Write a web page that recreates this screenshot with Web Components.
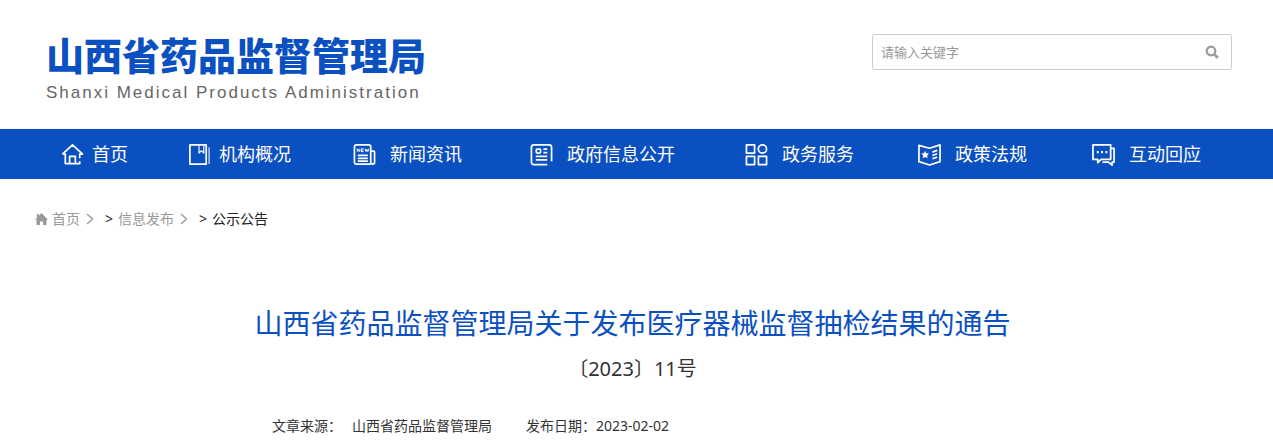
<!DOCTYPE html>
<html lang="zh-CN">
<head>
<meta charset="utf-8">
<meta name="viewport" content="width=device-width, initial-scale=1">
<title>山西省药品监督管理局</title>
<style>
    body {
        margin: 0;
        background: #fff;
        color: #333;
        font: 14px/20px "Noto Sans", "Noto Sans CJK SC", sans-serif;
        --blue: #0b50c1;
    }
</style>
</head>
<body>

<site-header>
    <site-logo slot="logo" sub="Shanxi Medical Products Administration">山西省药品监督管理局</site-logo>
    <search-box slot="search" hint="请输入关键字"></search-box>
</site-header>

<nav-bar>
    <nav-item icon="home">首页</nav-item>
    <nav-item icon="book">机构概况</nav-item>
    <nav-item icon="news" wide>新闻资讯</nav-item>
    <nav-item icon="doc" wide>政府信息公开</nav-item>
    <nav-item icon="grid" wide>政务服务</nav-item>
    <nav-item icon="law" wide>政策法规</nav-item>
    <nav-item icon="chat" wide>互动回应</nav-item>
</nav-bar>

<bread-crumb>
    <crumb-link home>首页</crumb-link>
    <crumb-link>信息发布</crumb-link>
    <span>公示公告</span>
</bread-crumb>

<article-head>
    <span slot="title">山西省药品监督管理局关于发布医疗器械监督抽检结果的通告</span>
    <span slot="number">〔2023〕11号</span>
    <span slot="source">山西省药品监督管理局</span>
    <span slot="date">2023-02-02</span>
</article-head>

<script>
const icons = {
    home: `<path d="M1.500 11.500 12 2l10.500 9.500H20M1.500 11.500H4.500V21.500H19.500V19M19.500 16V11.500H22"/><path d="M9 21.500V14h6v7.500"/>`,
    book: `<path d="M2 2h17v20H2z"/><path d="M22 4.500v17.500" opacity=".6"/><path d="M11.500 2.500v8l2.500-2.500 2.500 2.500v-8" stroke-width="1.200"/>`,
    news: `<path d="M18.500 22H3.500a2 2 0 0 1-2-2V4a2 2 0 0 1 2-2h13a2 2 0 0 1 2 2v16a2 2 0 0 0 4 0V9.500a1 1 0 0 0-1-1h-3"/><path d="M5 13h10.500M5 16h10.500M5 19h10.500"/><path d="M4.500 9V6l2 3V6M11 6H8.500v3H11M8.500 7.500H11M12.500 6l1 3 1-2.500 1 2.500 1-3" stroke-width="1"/>`,
    doc: `<path d="M18 22.500H4a2.500 2.500 0 0 1-2.500-2.500V4.500A2.500 2.500 0 0 1 4 2h16a2.500 2.500 0 0 1 2.500 2.500V19"/><rect x="6.500" y="6.500" width="4.500" height="4" rx="1"/><path d="M14 6.500h4M14 10h4M6 14h12M6 17.500h12"/>`,
    grid: `<path d="M1.500 2h8.500v8.500H1.500zM1.500 14h8.500v8.500H1.500zM14 14h8.500v8.500H14z"/><circle cx="18.200" cy="6.300" r="4.300"/>`,
    law: `<path d="M1 2.500 12 5.500l11-3.500v17.500L12 23 1 19.500z"/><path d="m15 9.500 5-1.800m-5 5.300 5-1.800m-5 5.300 5-1.800"/><path d="m7.500 8 1.200 2.700 2.900.3-2.100 2 .6 3-2.600-1.500-2.600 1.500.6-3-2.100-2 2.900-.3z" fill="currentColor" stroke="none"/>`,
    chat: `<path d="M1 2h18.500v15H9.500L6 20.500V17H1z"/><path d="M20 5.500h3V20h-2v3l-4-3h-6"/><path d="M5 9.500h2M9.500 9.500h2M14 9.500h2" stroke-width="2.200"/>`
};

const templates = {};

function template(name, html) {
    const tpl = document.createElement("template");
    tpl.innerHTML = html;
    templates[name] = tpl;
}

// shared base: clones the template that belongs to the tag
class BaseComponent extends HTMLElement
{
    constructor(){
        super();
        this.attachShadow({mode: "open"});
        this.shadowRoot.append(templates[this.localName].content.cloneNode(true));
    }
}

template("site-header", /*html*/`
    <style>
    :host { display: block; }
    header {
        display: flex;
        justify-content: space-between;
        align-items: flex-start;
        padding: 34px 41px 23px 46px;
    }
    </style>
    <header><slot name="logo"></slot><slot name="search"></slot></header>
`);

template("site-logo", /*html*/`
    <style>
    :host { display: block; }
    a { display: block; color: var(--blue); text-decoration: none; }
    strong {
        display: block;
        font: 900 38px/40px "Noto Sans CJK SC", sans-serif;
    }
    small {
        display: block;
        margin-top: 6px;
        color: #666;
        font: 17px/26px "Liberation Sans", Arial, sans-serif;
        letter-spacing: 2px;
    }
    </style>
    <a href="#"><strong><slot></slot></strong><small></small></a>
`);

template("search-box", /*html*/`
    <style>
    :host { display: block; width: 360px; }
    form {
        display: flex;
        box-sizing: border-box;
        height: 36px;
        border: 1px solid #ccc;
        border-radius: 2px;
    }
    input {
        flex: 1;
        min-width: 0;
        padding: 0 8px;
        border: 0;
        outline: 0;
        background: none;
        color: #333;
        font: 13px/20px "Noto Sans CJK SC", sans-serif;
    }
    input::placeholder { color: #999; opacity: 1; }
    button {
        display: grid;
        place-items: center;
        width: 38px;
        padding: 0;
        border: 0;
        background: none;
        color: #999;
    }
    </style>
    <form role="search">
        <input type="text">
        <button type="button" aria-label="搜索">
            <svg width="14" height="14" viewBox="0 0 14 14" fill="none" stroke="currentColor" stroke-width="2.200">
                <circle cx="6" cy="6" r="4.300"/><path d="m9.200 9.200 3.600 3.600" stroke-width="2.700"/>
            </svg>
        </button>
    </form>
`);

template("nav-bar", /*html*/`
    <style>
    :host { display: block; background: var(--blue); }
    nav {
        display: grid;
        grid-template-columns: 127fr 165fr 177fr 215fr 173fr 174fr 120fr;
        padding: 0 61px;
    }
    </style>
    <nav><slot></slot></nav>
`);

template("nav-item", /*html*/`
    <style>
    :host { display: block; --gap: 8px; }
    :host([wide]) { --gap: 14px; }
    a {
        display: flex;
        align-items: center;
        gap: var(--gap);
        height: 50px;
        color: #fff;
        font-size: 18px;
        text-decoration: none;
        white-space: nowrap;
    }
    svg { flex: none; }
    </style>
    <a href="#">
        <svg width="23" height="23" viewBox="0 0 24 24" fill="none" stroke="currentColor" stroke-width="1.800" stroke-linejoin="round" aria-hidden="true"></svg>
        <slot></slot>
    </a>
`);

template("bread-crumb", /*html*/`
    <style>
    :host { display: block; }
    nav {
        display: flex;
        align-items: center;
        padding: 30px 35px 0;
        color: #222;
    }
    </style>
    <nav aria-label="breadcrumb"><slot></slot></nav>
`);

template("crumb-link", /*html*/`
    <style>
    :host { display: flex; align-items: center; }
    a {
        display: flex;
        align-items: center;
        gap: 4px;
        margin-right: 6px;
        color: #999;
        text-decoration: none;
    }
    .home { display: none; }
    :host([home]) .home { display: block; }
    .sep { margin: 0 5px 0 11px; }
    </style>
    <a href="#">
        <svg class="home" width="13" height="13" viewBox="0 0 13 13" fill="#999"><path d="M6.500 0 13 6.800h-1.500V12H8V8.500H5V12H1.500V6.800H0L2 4.700V1h1.800v1.800z"/></svg>
        <slot></slot>
    </a>
    <svg width="8" height="12" viewBox="0 0 8 12" fill="none" stroke="#999" stroke-width="1.300"><path d="m1 1 5.500 5L1 11"/></svg>
    <span class="sep">&gt;</span>
`);

template("article-head", /*html*/`
    <style>
    :host { display: block; text-align: center; }
    header { padding: 74px 8px 16px 0; }
    h1 {
        margin: 0;
        color: var(--blue);
        font-size: 28px;
        font-weight: 400;
        line-height: 40px;
    }
    h2 {
        margin: 10px 0 0;
        font-size: 20px;
        font-weight: 400;
        line-height: 32px;
    }
    .meta {
        display: flex;
        gap: 34px;
        margin: 31px 0 0;
        padding: 0 272px;
        text-align: left;
        white-space: nowrap;
    }
    .source { margin-left: 10px; }
    </style>
    <header>
        <h1><slot name="title"></slot></h1>
        <h2><slot name="number"></slot></h2>
        <div class="meta">
            <span>文章来源：<span class="source"><slot name="source"></slot></span></span>
            <span>发布日期：<slot name="date"></slot></span>
        </div>
    </header>
`);

class SiteLogo extends BaseComponent
{
    connectedCallback(){
        this.shadowRoot.querySelector("small").textContent = this.getAttribute("sub");
    }
}

class SearchBox extends BaseComponent
{
    connectedCallback(){
        const input = this.shadowRoot.querySelector("input");
        input.placeholder = this.getAttribute("hint");
        input.setAttribute("aria-label", this.getAttribute("hint"));
    }
}

class NavItem extends BaseComponent
{
    connectedCallback(){
        this.shadowRoot.querySelector("svg").innerHTML = icons[this.getAttribute("icon")];
    }
}

customElements.define("site-header", class extends BaseComponent {});
customElements.define("site-logo", SiteLogo);
customElements.define("search-box", SearchBox);
customElements.define("nav-bar", class extends BaseComponent {});
customElements.define("nav-item", NavItem);
customElements.define("bread-crumb", class extends BaseComponent {});
customElements.define("crumb-link", class extends BaseComponent {});
customElements.define("article-head", class extends BaseComponent {});
</script>
</body>
</html>
